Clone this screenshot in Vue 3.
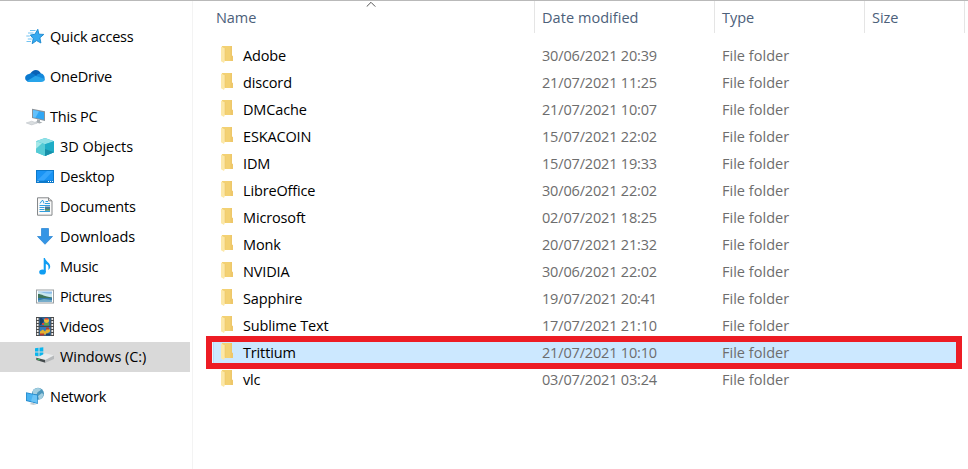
<script setup>
const places = [
  { label: 'Quick access', icon: 'star', root: true },
  { label: 'OneDrive', icon: 'cloud', root: true, spaced: true },
  { label: 'This PC', icon: 'pc', root: true, spaced: true },
  { label: '3D Objects', icon: 'cube' },
  { label: 'Desktop', icon: 'desktop' },
  { label: 'Documents', icon: 'document' },
  { label: 'Downloads', icon: 'download' },
  { label: 'Music', icon: 'music' },
  { label: 'Pictures', icon: 'picture' },
  { label: 'Videos', icon: 'video' },
  { label: 'Windows (C:)', icon: 'drive', selected: true },
  { label: 'Network', icon: 'network', root: true, spaced: true },
]

const folders = [
  ['Adobe', '30/06/2021 20:39'],
  ['discord', '21/07/2021 11:25'],
  ['DMCache', '21/07/2021 10:07'],
  ['ESKACOIN', '15/07/2021 22:02'],
  ['IDM', '15/07/2021 19:33'],
  ['LibreOffice', '30/06/2021 22:02'],
  ['Microsoft', '02/07/2021 18:25'],
  ['Monk', '20/07/2021 21:32'],
  ['NVIDIA', '30/06/2021 22:02'],
  ['Sapphire', '19/07/2021 20:41'],
  ['Sublime Text', '17/07/2021 21:10'],
  ['Trittium', '21/07/2021 10:10'],
  ['vlc', '03/07/2021 03:24'],
]
</script>

<template>
  <div class="explorer">
    <nav class="sidebar">
      <div
        v-for="p in places"
        :key="p.label"
        class="place"
        :class="[p.icon, { root: p.root, spaced: p.spaced, selected: p.selected }]"
      >
        <svg class="place-icon" viewBox="0 0 20 20">
          <g v-if="p.icon === 'star'">
            <path d="M12.800 2.300L13.900 7.200 18.800 7.400 14.900 10.800 15.900 16 11.600 13.600 7.200 16.700 8.200 11.600 5.300 8 9.800 7.300z" fill="#37aaf0" stroke="#1687cf" stroke-width=".9" />
            <path d="M5 3.500h5.500M3 6h5.500M1.300 9h3.500M2.800 12h4M1.500 14.500h4.500" stroke="#62bcf0" stroke-width=".9" />
          </g>
          <g v-else-if="p.icon === 'cloud'">
            <path d="M5 7.500C7 2.500 13 1 16 6.500L12 11H4z" fill="#0a61b5" />
            <path d="M4 7C6.500 5.500 9 6.500 11 9l-6.500 6C-1.500 14.500-1 7.500 4 7z" fill="#0b79cf" />
            <path d="M11 9c2-3 6-3 7.500-1 1.500 1.500 1.500 4.500.5 6z" fill="#1489dc" />
            <path d="M2 14l8.500-5.200L19.800 12c0 2-1.500 3-3.800 3H5c-1.500 0-2.300-.300-3-1z" fill="#28a4ea" />
          </g>
          <g v-else-if="p.icon === 'pc'">
            <path d="M7 1.700L20 4.300v9.700L7 11z" fill="#8a9299" />
            <path d="M8 2.900L19 5.200v7.600L8 10.200z" fill="#30a7f5" />
            <path d="M8 2.900l6 1.300-3.500 6.600-2.500-.6z" fill="#62c1fb" />
            <path d="M12 12.200l3 .8v1.700l2.500.8-3 1-4.500-1.400 2-.8z" fill="#a7adb1" />
            <path d="M1.200 15.900l5.500-1.700 5.600 1.900-5.700 1.800z" fill="#d9dddf" stroke="#b7bdc2" stroke-width=".5" />
          </g>
          <g v-else-if="p.icon === 'cube'">
            <path d="M10 1l9 3.200v11L10 19l-9-3.800v-11z" fill="#35bfd2" />
            <path d="M1 4.200L10 1l9 3.200-9 3z" fill="#91e1e6" />
            <path d="M1 4.200l9 3V19l-9-3.800z" fill="#55cbd5" />
            <path d="M10 7.200l9-3v11L10 19z" fill="#1eacc6" />
            <path d="M1 4.200l6 2-6 5.500z" fill="#a6e8e8" />
            <path d="M10 19V12l9 3.200z" fill="#178fa9" />
          </g>
          <g v-else-if="p.icon === 'desktop'">
            <rect x="1" y="3" width="18" height="13" fill="#0d79ca" />
            <path d="M2 4h16v9.500H2z" fill="#1a94f5" />
            <path d="M12 4h6L9 13.500H2z" fill="#35a5fc" />
            <path d="M2.500 14.500h1M13 14.500h1M15 14.500h1M17 14.500h1" stroke="#fff" />
          </g>
          <g v-else-if="p.icon === 'document'">
            <path d="M2.500 .8h11l3.500 3v14.400H2.500z" fill="#fafafa" stroke="#85888a" />
            <path d="M13.500 .8v3H17" fill="#ddd" stroke="#888" />
            <path d="M5 6.500l2-3h1l1 3M10.500 4.500h2.500M10 6.500h5M4.500 8.500h10.500M4.500 10.500h5M4.500 12.500h5M4.500 14.500h10.500" fill="none" stroke="#319fe0" />
            <path d="M10 9.500h5v4h-5z" fill="#47799a" />
            <path d="M10 12h5v1.500h-5z" fill="#58915a" />
          </g>
          <path v-else-if="p.icon === 'download'" d="M6.500 1.500h7v8h4L10 17.300 2.500 9.500h4z" fill="#3495e5" stroke="#2381d2" stroke-width=".7" />
          <g v-else-if="p.icon === 'music'">
            <ellipse cx="7.500" cy="15" rx="3.300" ry="2.600" fill="#109df2" />
            <path d="M8.700 15V1h1.200c.8 3.500 5.300 4.800 5.300 8.500 0 1.500-.7 2.700-2 3.600C14 10 13.500 7.500 10.800 7v8z" fill="#109df2" />
          </g>
          <g v-else-if="p.icon === 'picture'">
            <rect x="1.500" y="3" width="17" height="13" fill="#fff" stroke="#999fa2" />
            <path d="M3 4.500h14v10H3z" fill="#8dbdea" />
            <path d="M3 5c4-.5 8 2.500 14 1.500V10H3z" fill="#c8e6ef" />
            <path d="M3 7c4 0 6 2.500 14 3.500v2H3z" fill="#3f755b" />
            <path d="M3 11h14v3.500H3z" fill="#327bab" />
            <path d="M3 13.500L9 12l8 1v1.500H3z" fill="#73acc7" />
          </g>
          <g v-else-if="p.icon === 'video'">
            <path d="M1 0h18v19H1z" fill="#4a4a4a" />
            <path d="M2.700 1v18M17.300 1v18" stroke="#ededed" stroke-width="1.700" stroke-dasharray="2 1" />
            <path d="M4.500 .5h11V9h-11z" fill="#286aa9" />
            <path d="M4.500 10h11v8.500h-11z" fill="#327abc" />
            <path d="M5 1h2l2 3-3 4H5z" fill="#193e66" />
            <circle cx="11.500" cy="3.600" r="2.500" fill="#edbd38" />
            <path d="M10 1h3v1.500h-3zM7 6h3v2H7z" fill="#d5423d" />
            <path d="M9 6h5v2.500H9z" fill="#61a646" />
            <path d="M5 14.500l3-2 2 2 2-3 3 1v2l-4 3H5z" fill="#e4b330" />
            <path d="M11 10.500h3v2h-3zM5 16.500h4v2H5z" fill="#b93b33" />
            <path d="M11 16.500h4v2h-4z" fill="#183f70" />
          </g>
          <g v-else-if="p.icon === 'drive'">
            <path d="M0 1.200l3.500-.4v3.700H0zM4.500 .7L8.300 .2v4.300h-3.800zM0 5.500h3.500v3.700L0 8.800zM4.500 5.500h3.800v4.200l-3.800-.4z" fill="#0ab5ed" />
            <path d="M1.500 10.800l9-4.500L19 8.500l-8.500 4.500z" fill="#e9ebec" />
            <path d="M1.300 10.800l9 2.200v2.700L1.300 13z" fill="#454b4d" />
            <path d="M10.300 13L19 8.500V12l-8.700 3.700z" fill="#b6b9bb" />
            <path d="M2.500 12.200l2.200 .6" stroke="#35cc5b" stroke-width="1.300" />
          </g>
          <g v-else>
            <circle cx="13" cy="6.700" r="6" fill="#4c97bc" />
            <path d="M8 3.500c2-3 6-3 8-1.500-1 3-4 2-4 5L8 8zM13 9l4-3 1.500 1.500-1.500 4-3 1z" fill="#a4cfe0" />
            <path d="M1 5.300L12.800 7.700v9.400L1 14z" fill="#268bcc" />
            <path d="M1.800 6.300L12 8.500v7.300L1.800 13.200z" fill="#49b3f1" />
            <path d="M8 7.700l4 .8v7.300l-6-1.500z" fill="#6bc4f6" />
            <path d="M4.500 17l3-1.500 4 1.800-3 .8z" fill="#c3cdd2" />
          </g>
        </svg>
        <span>{{ p.label }}</span>
      </div>
    </nav>

    <main class="files">
      <div class="header">
        <span class="col name">Name</span>
        <span class="col">Date modified</span>
        <span class="col">Type</span>
        <span class="col">Size</span>
        <svg class="sort" viewBox="0 0 10 6"><path d="M.7 5.600L5 1.300l4.300 4.300" fill="none" stroke="#555" /></svg>
      </div>
      <div class="rows">
        <div v-for="[name, date] in folders" :key="name" class="row" :class="{ picked: name === 'Trittium' }">
          <span class="filename">
            <svg class="folder" viewBox="0 0 12 17">
              <path d="M1 0h10v9.500l1 1V15H2z" fill="#f3d173" />
              <path d="M9.500 0H11v9.500l1 1V15H9.500z" fill="#eec76a" />
              <path d="M0 .5L4 2.500v12L3 17l-3-1.800z" fill="#fce8a8" />
              <path d="M4 2.500v12" stroke="#e8c264" stroke-width=".5" />
            </svg>
            {{ name }}
          </span>
          <span class="date">{{ date }}</span>
          <span class="type">File folder</span>
        </div>
      </div>
    </main>
  </div>
</template>

<style>
body { margin: 0; background: #fff; overflow: hidden; }
</style>
<style scoped>
.explorer {
  box-sizing: border-box;
  width: 968px;
  height: 469px;
  display: grid;
  grid-template-columns: 193px 1fr;
  border-top: 1px solid #b9b9b9;
  background: #fff;
  color: #000;
  font: 14.5px/20px "Open Sans", "Noto Sans", sans-serif;
  letter-spacing: -0.22px;
  white-space: nowrap;
}
.sidebar { box-sizing: border-box; padding-top: 21px; border-right: 1px solid #f3f3f3; }
.place { box-sizing: border-box; display: flex; align-items: center; gap: 5px; width: 190px; height: 30px; padding-left: 35px; }
.place.root { padding-left: 25px; }
.place.spaced { margin-top: 10px; }
.place.selected { background: #d9d9d9; }
.place.cube, .place.drive, .place.download { letter-spacing: -0.05px; }
.place.picture { letter-spacing: -0.35px; }
.place-icon { width: 20px; height: 20px; flex: none; }
.header { position: relative; display: grid; grid-template-columns: 342px 180px 150px 100px; height: 32px; color: #4c607a; letter-spacing: -0.05px; }
.col { box-sizing: border-box; padding: 7px 0 0 7px; border-right: 1px solid #e5e5e5; }
.col:nth-child(2) { letter-spacing: 0.05px; }
.col.name { padding-left: 23px; }
.sort { position: absolute; left: 173px; top: 0; width: 10px; height: 6px; }
.rows { padding-top: 9px; }
.row { box-sizing: border-box; display: grid; grid-template-columns: 316px 180px 1fr; align-items: center; height: 27px; margin-left: 13px; padding-left: 15px; width: 756px; color: #6d6d6d; }
.picked { height: 33px; margin-top: -3px; margin-bottom: -3px; padding-left: 9px; border: 6px solid #ed1c24; background: #cce8ff; box-shadow: inset 1px 0 #e8f5ff, inset 2px 0 #b3dcfb; }
.filename { display: flex; align-items: center; gap: 10px; color: #000; letter-spacing: -0.15px; }
.folder { width: 12px; height: 17px; margin-top: -3px; }
.date { padding-left: 5px; letter-spacing: -0.17px; }
.type { padding-left: 5px; letter-spacing: 0.02px; }
</style>
